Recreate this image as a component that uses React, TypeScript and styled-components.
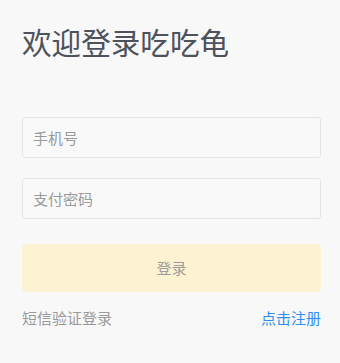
import React from "react";
import styled, { createGlobalStyle } from "styled-components";

const Global = createGlobalStyle`
  html, body { margin: 0; padding: 0; background: #f8f8f8; }
  body { font-family: "Noto Sans CJK SC", "Noto Sans", sans-serif; }
  * { box-sizing: border-box; }
`;

const Page = styled.div`
  padding: 23px 19px 0 22px;
  display: flex;
  flex-direction: column;
`;

const Title = styled.h1`
  margin: 0;
  font-size: 29.6px;
  line-height: 38px;
  font-weight: 400;
  color: #4d525b;
`;

const Form = styled.div`
  margin-top: 56px;
  display: flex;
  flex-direction: column;
  gap: 20px;
`;

const Input = styled.input`
  height: 41px;
  width: 100%;
  border: 1px solid #e4e4e4;
  border-radius: 3px;
  background: #f9f9f9;
  padding: 0 10px;
  font-family: inherit;
  font-size: 15px;
  color: #333;
  outline: none;
  &::placeholder { color: #9a9a9a; }
`;

const Button = styled.button`
  margin-top: 5px;
  height: 48px;
  width: 100%;
  border: none;
  border-radius: 4px;
  background: #fdf2d1;
  color: #9d9d9d;
  font-family: inherit;
  font-size: 15px;
  padding: 0 0 2px;
`;

const Links = styled.div`
  margin-top: 16px;
  display: flex;
  justify-content: space-between;
  align-items: center;
  font-size: 15px;
  line-height: 20px;
`;

const Link = styled.span<{ $primary?: boolean }>`
  color: ${(p) => (p.$primary ? "#2d8cf0" : "#9a9a9a")};
`;

export default function App() {
  return (
    <>
      <Global />
      <Page>
        <Title>欢迎登录吃吃龟</Title>
        <Form>
          <Input placeholder="手机号" />
          <Input placeholder="支付密码" type="password" />
          <Button>登录</Button>
        </Form>
        <Links>
          <Link>短信验证登录</Link>
          <Link $primary>点击注册</Link>
        </Links>
      </Page>
    </>
  );
}
